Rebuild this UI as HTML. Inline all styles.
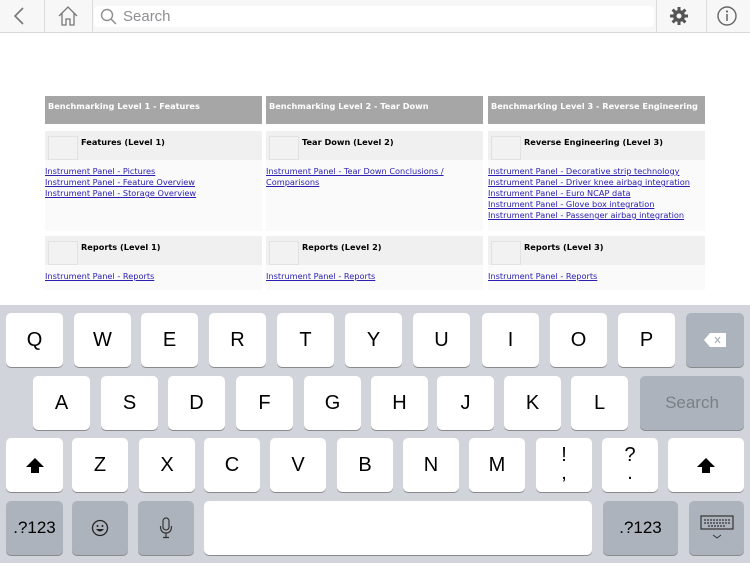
<!DOCTYPE html>
<html><head><meta charset="utf-8"><style>
*{margin:0;padding:0;box-sizing:border-box}
body{width:750px;height:563px;overflow:hidden;background:#fff;font-family:"Liberation Sans",sans-serif;position:relative}
.top{position:absolute;left:0;top:0;width:750px;height:33px;background:#f7f7f7;border-bottom:1px solid #d8d8d8}
.sep{position:absolute;top:0;width:1px;height:32px;background:#dcdcdc}
.search{position:absolute;left:94px;top:6px;width:560px;height:21px;background:#fff;border-radius:4px}
.search span{position:absolute;left:29px;top:2px;font-size:15px;color:#8e8e93}
.col{position:absolute;top:96px;width:217px;font-family:"DejaVu Sans",Verdana,sans-serif;font-size:8.2px}
.hd{height:28px;background:#a6a6a6;color:#fff;font-weight:bold;padding:5px 3px}
.sub{margin-top:7px;height:29px;background:#f0f0f0;position:relative;font-weight:bold;color:#000}
.sub .ic{position:absolute;left:3px;top:5px;width:30px;height:24px;border:1px solid #e2e2e2;background:#f2f2f2}
.sub .t{position:absolute;left:36px;top:6px}
.lk{background:#fafafa;padding:6px 0 0 0;color:#1a0dab;line-height:11px}
.lk a{color:#2a1fb0;text-decoration:underline;display:block;white-space:nowrap}
.kb{position:absolute;left:0;top:305px;width:750px;height:258px;background:#d1d5db}
.k{position:absolute;width:57px;height:54px;background:#fff;border-radius:5px;box-shadow:0 1px 0 #898a8d;font-size:20px;text-align:center;line-height:54px;color:#000}
.g{background:#adb3bd}
</style></head><body>
<div class="top">
<svg style="position:absolute;left:12px;top:6px" width="14" height="20"><path d="M11 2 L3 10 L11 18" stroke="#777" stroke-width="1.6" fill="none"/></svg>
<div class="sep" style="left:44px"></div>
<svg style="position:absolute;left:57px;top:5px" width="22" height="22"><path d="M2 11 L11 2 L20 11 M5 8 V20 H9 V14 H13 V20 H17 V8" stroke="#777" stroke-width="1.3" fill="none"/></svg>
<div class="sep" style="left:92px"></div>
<div class="search"><svg style="position:absolute;left:6px;top:2px" width="18" height="18"><circle cx="7" cy="7" r="5.5" stroke="#8e8e93" stroke-width="1.4" fill="none"/><path d="M11 11 L16 16" stroke="#8e8e93" stroke-width="1.5"/></svg><span>Search</span></div>
<div class="sep" style="left:656px"></div>
<svg style="position:absolute;left:669px;top:6px" width="20" height="20" viewBox="0 0 20 20"><g stroke="#555" stroke-width="3"><path d="M10 1V19M1 10H19M3.6 3.6L16.4 16.4M16.4 3.6L3.6 16.4"/></g><circle cx="10" cy="10" r="6" fill="#555"/><circle cx="10" cy="10" r="2.5" fill="#f7f7f7"/></svg>
<div class="sep" style="left:706px"></div>
<svg style="position:absolute;left:716px;top:5px" width="22" height="22"><circle cx="11" cy="11" r="9" stroke="#666" stroke-width="1.4" fill="none"/><circle cx="11" cy="6.5" r="1.1" fill="#666"/><path d="M11 9V16" stroke="#666" stroke-width="1.5"/></svg>
</div>

<div class="col" style="left:45px">
<div class="hd">Benchmarking Level 1 - Features</div>
<div class="sub"><div class="ic"></div><div class="t">Features (Level 1)</div></div>
<div class="lk" style="height:71px"><a>Instrument Panel - Pictures</a><a>Instrument Panel - Feature Overview</a><a>Instrument Panel - Storage Overview</a></div>
<div class="sub" style="margin-top:5px"><div class="ic"></div><div class="t">Reports (Level 1)</div></div>
<div class="lk" style="height:25px"><a>Instrument Panel - Reports</a></div>
</div>
<div class="col" style="left:266px">
<div class="hd">Benchmarking Level 2 - Tear Down</div>
<div class="sub"><div class="ic"></div><div class="t">Tear Down (Level 2)</div></div>
<div class="lk" style="height:71px"><a>Instrument Panel - Tear Down Conclusions /</a><a>Comparisons</a></div>
<div class="sub" style="margin-top:5px"><div class="ic"></div><div class="t">Reports (Level 2)</div></div>
<div class="lk" style="height:25px"><a>Instrument Panel - Reports</a></div>
</div>
<div class="col" style="left:488px">
<div class="hd">Benchmarking Level 3 - Reverse Engineering</div>
<div class="sub"><div class="ic"></div><div class="t">Reverse Engineering (Level 3)</div></div>
<div class="lk" style="height:71px"><a>Instrument Panel - Decorative strip technology</a><a>Instrument Panel - Driver knee airbag integration</a><a>Instrument Panel - Euro NCAP data</a><a>Instrument Panel - Glove box integration</a><a>Instrument Panel - Passenger airbag integration</a></div>
<div class="sub" style="margin-top:5px"><div class="ic"></div><div class="t">Reports (Level 3)</div></div>
<div class="lk" style="height:25px"><a>Instrument Panel - Reports</a></div>
</div>

<div class="kb">
<div class="k" style="left:6px;top:8px">Q</div>
<div class="k" style="left:74px;top:8px">W</div>
<div class="k" style="left:141px;top:8px">E</div>
<div class="k" style="left:209px;top:8px">R</div>
<div class="k" style="left:277px;top:8px">T</div>
<div class="k" style="left:345px;top:8px">Y</div>
<div class="k" style="left:413px;top:8px">U</div>
<div class="k" style="left:482px;top:8px">I</div>
<div class="k" style="left:550px;top:8px">O</div>
<div class="k" style="left:618px;top:8px">P</div>
<div class="k g" style="left:686px;top:8px;width:58px"><svg style="margin-top:19px" width="24" height="16"><path d="M7 1H23V15H7L1 8Z" fill="#fff"/><path d="M12 5L17 11M17 5L12 11" stroke="#adb3bd" stroke-width="1.3"/></svg></div>

<div class="k" style="left:33px;top:71px">A</div>
<div class="k" style="left:101px;top:71px">S</div>
<div class="k" style="left:168px;top:71px">D</div>
<div class="k" style="left:236px;top:71px">F</div>
<div class="k" style="left:304px;top:71px">G</div>
<div class="k" style="left:371px;top:71px">H</div>
<div class="k" style="left:437px;top:71px">J</div>
<div class="k" style="left:504px;top:71px">K</div>
<div class="k" style="left:571px;top:71px">L</div>
<div class="k g" style="left:640px;top:71px;width:104px;color:#7b7f86;font-size:17px">Search</div>

<div class="k" style="left:6px;top:133px"><svg style="margin-top:20px" width="18" height="16"><path d="M9 0L18 9H13V15H5V9H0Z" fill="#000"/></svg></div>
<div class="k" style="left:72px;top:133px;width:56px">Z</div>
<div class="k" style="left:139px;top:133px;width:56px">X</div>
<div class="k" style="left:204px;top:133px;width:56px">C</div>
<div class="k" style="left:270px;top:133px;width:56px">V</div>
<div class="k" style="left:337px;top:133px;width:56px">B</div>
<div class="k" style="left:403px;top:133px;width:56px">N</div>
<div class="k" style="left:469px;top:133px;width:56px">M</div>
<div class="k" style="left:536px;top:133px;width:56px;line-height:18px;padding-top:8px">!<br>,</div>
<div class="k" style="left:602px;top:133px;width:56px;line-height:18px;padding-top:8px">?<br>.</div>
<div class="k" style="left:668px;top:133px;width:76px"><svg style="margin-top:20px" width="18" height="16"><path d="M9 0L18 9H13V15H5V9H0Z" fill="#000"/></svg></div>

<div class="k g" style="left:6px;top:196px;font-size:17px">.?123</div>
<div class="k g" style="left:72px;top:196px;width:56px"><svg style="margin-top:18px" width="18" height="18"><circle cx="9" cy="9" r="7.5" stroke="#222" stroke-width="1.3" fill="none"/><circle cx="6.5" cy="7" r="1" fill="#222"/><circle cx="11.5" cy="7" r="1" fill="#222"/><path d="M5 10Q9 15 13 10Z" fill="#222"/></svg></div>
<div class="k g" style="left:138px;top:196px;width:56px"><svg style="margin-top:16px" width="14" height="22"><rect x="4" y="1" width="6" height="12" rx="3" stroke="#333" stroke-width="1.2" fill="none"/><path d="M1.5 9Q1.5 16 7 16Q12.5 16 12.5 9M7 16V20M4 20.5H10" stroke="#333" stroke-width="1.2" fill="none"/></svg></div>
<div class="k" style="left:204px;top:196px;width:388px"></div>
<div class="k g" style="left:603px;top:196px;width:75px;font-size:17px">.?123</div>
<div class="k g" style="left:689px;top:196px;width:55px"><svg style="margin-top:14px" width="34" height="26"><rect x="1" y="1" width="32" height="13" stroke="#333" stroke-width="1.2" fill="none"/><path d="M4 5H30M4 8H30M8 11H26" stroke="#333" stroke-width="1.3" stroke-dasharray="2 1"/><path d="M13 20L17 23L21 20" stroke="#333" stroke-width="1" fill="none"/></svg></div>
</div>
</body></html>
